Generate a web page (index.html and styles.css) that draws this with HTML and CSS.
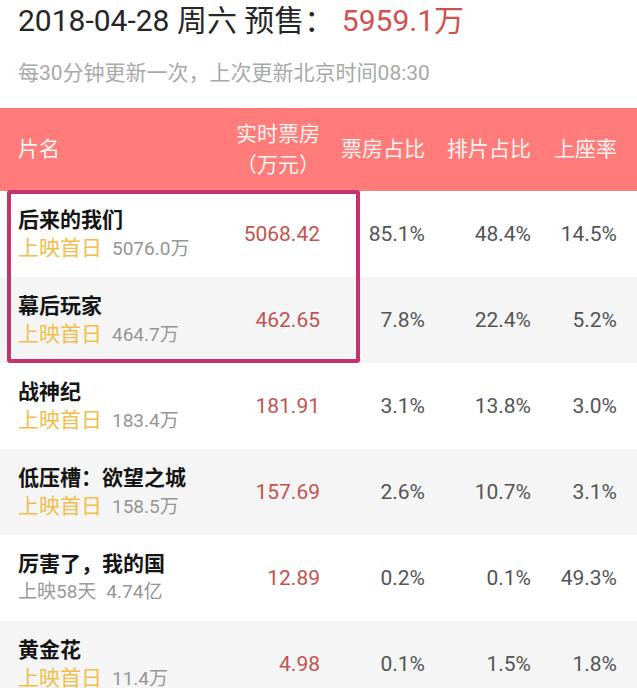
FILE: index.html
```html
<!DOCTYPE html>
<html lang="zh-CN">
<head>
<meta charset="utf-8">
<link rel="stylesheet" href="styles.css">
</head>
<body>
<div class="page">
  <div class="title">2018-04-28 周六 预售： <span class="title-num">5959.1万</span></div>
  <div class="subtitle">每30分钟更新一次，上次更新北京时间08:30</div>

  <div class="table">
    <div class="row head">
      <div class="c-name">片名</div>
      <div class="c-num">实时票房<br>（万元）</div>
      <div class="c-num">票房占比</div>
      <div class="c-num">排片占比</div>
      <div class="c-num">上座率</div>
    </div>

    <div class="body">
      <div class="highlight"></div>

      <div class="row">
        <div class="c-name"><div class="name">后来的我们</div><div class="sub"><span class="gold">上映首日</span><span class="total">5076.0万</span></div></div>
        <div class="c-num box">5068.42</div>
        <div class="c-num pct">85.1%</div>
        <div class="c-num pct">48.4%</div>
        <div class="c-num pct">14.5%</div>
      </div>
      <div class="row alt">
        <div class="c-name"><div class="name">幕后玩家</div><div class="sub"><span class="gold">上映首日</span><span class="total">464.7万</span></div></div>
        <div class="c-num box">462.65</div>
        <div class="c-num pct">7.8%</div>
        <div class="c-num pct">22.4%</div>
        <div class="c-num pct">5.2%</div>
      </div>
      <div class="row">
        <div class="c-name"><div class="name">战神纪</div><div class="sub"><span class="gold">上映首日</span><span class="total">183.4万</span></div></div>
        <div class="c-num box">181.91</div>
        <div class="c-num pct">3.1%</div>
        <div class="c-num pct">13.8%</div>
        <div class="c-num pct">3.0%</div>
      </div>
      <div class="row alt">
        <div class="c-name"><div class="name">低压槽：欲望之城</div><div class="sub"><span class="gold">上映首日</span><span class="total">158.5万</span></div></div>
        <div class="c-num box">157.69</div>
        <div class="c-num pct">2.6%</div>
        <div class="c-num pct">10.7%</div>
        <div class="c-num pct">3.1%</div>
      </div>
      <div class="row">
        <div class="c-name"><div class="name">厉害了，我的国</div><div class="sub"><span class="days">上映58天</span><span class="total">4.74亿</span></div></div>
        <div class="c-num box">12.89</div>
        <div class="c-num pct">0.2%</div>
        <div class="c-num pct">0.1%</div>
        <div class="c-num pct">49.3%</div>
      </div>
      <div class="row alt">
        <div class="c-name"><div class="name">黄金花</div><div class="sub"><span class="gold">上映首日</span><span class="total">11.4万</span></div></div>
        <div class="c-num box">4.98</div>
        <div class="c-num pct">0.1%</div>
        <div class="c-num pct">1.5%</div>
        <div class="c-num pct">1.8%</div>
      </div>
    </div>
  </div>
</div>
</body>
</html>
```

FILE: styles.css
```css
html, body {
  margin: 0;
  padding: 0;
  background: #ffffff;
}

.page {
  font-family: Roboto, "Noto Sans CJK SC", sans-serif;
  color: #222;
  overflow: hidden;
  height: 688px;
}

.title {
  padding: 0 0 0 18px;
  height: 42px;
  line-height: 42px;
  font-size: 30px;
  color: #262626;
  white-space: nowrap;
}

.title-num {
  color: #cf5150;
}

.subtitle {
  padding-left: 18px;
  margin-top: 16px;
  height: 30px;
  line-height: 30px;
  font-size: 21px;
  color: #a9a9a9;
  white-space: nowrap;
}

.table {
  margin-top: 20px;
}

.row {
  display: grid;
  grid-template-columns: 1fr 90px 105px 106px 86px;
  align-items: center;
  padding: 0 20px 0 18px;
  height: 86px;
  background: #ffffff;
}

.row.alt {
  background: #f5f5f5;
}

.row.head {
  height: 83px;
  background: #ff7c7b;
  color: #fff3f1;
  font-size: 21px;
  line-height: 31px;
}

.c-num {
  text-align: right;
  white-space: nowrap;
}

.body {
  position: relative;
}

.highlight {
  position: absolute;
  left: 7px;
  top: -1px;
  width: 345px;
  height: 165px;
  border: 4px solid #c4336d;
  border-radius: 3px;
  z-index: 2;
}

.name {
  font-size: 21px;
  font-weight: bold;
  color: #151515;
  line-height: 28px;
  white-space: nowrap;
}

.sub {
  line-height: 28px;
  white-space: nowrap;
  display: flex;
  align-items: baseline;
}

.gold {
  font-size: 21px;
  color: #f1be4c;
}

.days {
  font-size: 19px;
  color: #9b9b9b;
}

.total {
  margin-left: 10px;
  font-size: 19px;
  color: #959595;
}

.box {
  font-size: 21px;
  color: #c4524f;
}

.pct {
  font-size: 21px;
  color: #545454;
}
```
